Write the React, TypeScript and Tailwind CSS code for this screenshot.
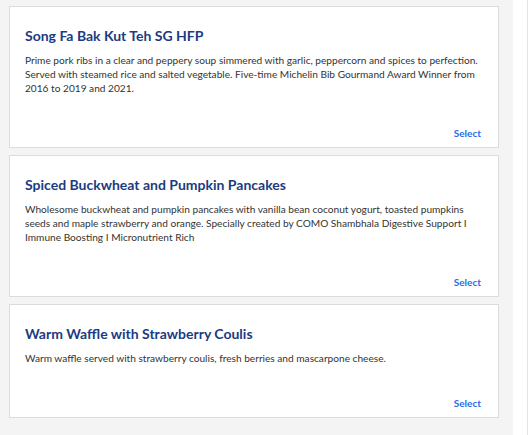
import React from "react";

const items = [
  {
    title: "Song Fa Bak Kut Teh SG HFP",
    desc: "Prime pork ribs in a clear and peppery soup simmered with garlic, peppercorn and spices to perfection. Served with steamed rice and salted vegetable. Five-time Michelin Bib Gourmand Award Winner from 2016 to 2019 and 2021.",
  },
  {
    title: "Spiced Buckwheat and Pumpkin Pancakes",
    desc: "Wholesome buckwheat and pumpkin pancakes with vanilla bean coconut yogurt, toasted pumpkins seeds and maple strawberry and orange. Specially created by COMO Shambhala Digestive Support I Immune Boosting I Micronutrient Rich",
  },
  {
    title: "Warm Waffle with Strawberry Coulis",
    desc: "Warm waffle served with strawberry coulis, fresh berries and mascarpone cheese.",
  },
];

function MenuCard({ title, desc }: { title: string; desc: string }) {
  return (
    <div className="bg-white border border-[#dcdcdc] pt-[19px] pb-[8px] pl-[15px] pr-[17px] flex flex-col">
      <h2 className="text-[14px] leading-[20px] font-bold text-[#1c3b82]">{title}</h2>
      <p className="mt-[7px] text-[10.15px] leading-[14px] text-[#333]">{desc}</p>
      <div className="mt-[32px] flex justify-end">
        <button className="text-[10px] leading-[12px] font-bold text-[#2a6de6]">Select</button>
      </div>
    </div>
  );
}

export default function App() {
  return (
    <div className="flex min-h-[435px] w-[530px] bg-white" style={{ fontFamily: "Lato, 'Open Sans', sans-serif" }}>
      <main className="w-[513px] bg-[#f4f4f4] pl-[9px] pr-[14px] pt-[6px] flex flex-col gap-[7px]">
        {items.map((it) => (
          <MenuCard key={it.title} title={it.title} desc={it.desc} />
        ))}
      </main>
      <div className="w-[15px] bg-white border-r border-[#e4e4e4]" />
      <div className="flex-1 bg-white" />
    </div>
  );
}
